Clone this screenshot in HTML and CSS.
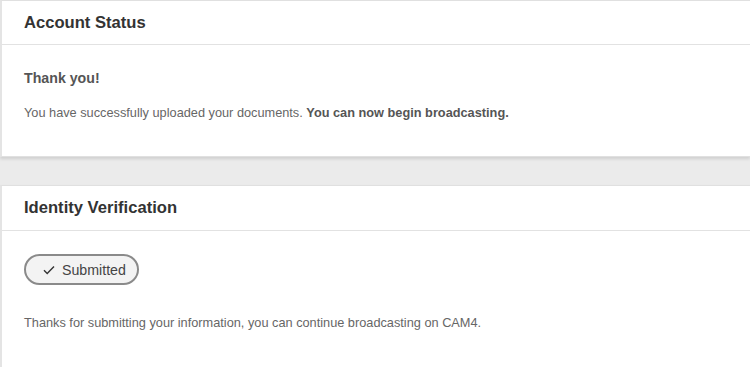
FILE: index.html
```html
<!DOCTYPE html>
<html>
<head>
<meta charset="utf-8">
<link rel="stylesheet" href="styles.css">
</head>
<body>
<div class="page">
  <section class="card card-status">
    <header class="card-header"><h2>Account Status</h2></header>
    <div class="card-body">
      <h3 class="thanks">Thank you!</h3>
      <p class="text">You have successfully uploaded your documents. <strong>You can now begin broadcasting.</strong></p>
    </div>
  </section>
  <section class="card card-identity">
    <header class="card-header"><h2>Identity Verification</h2></header>
    <div class="card-body">
      <span class="pill">
        <svg class="check" width="12" height="10" viewBox="0 0 12 10"><path d="M1 5.2 L4.2 8.4 L11 1.4" fill="none" stroke="#333" stroke-width="1.4"/></svg>
        Submitted
      </span>
      <p class="text note">Thanks for submitting your information, you can continue broadcasting on CAM4.</p>
    </div>
  </section>
</div>
</body>
</html>
```
FILE: styles.css
```css
html, body {
  margin: 0;
  padding: 0;
}
body {
  background: #ebebeb;
  font-family: "Liberation Sans", Arial, sans-serif;
  overflow: hidden;
  height: 367px;
}
.page {
  display: flex;
  flex-direction: column;
  gap: 28px;
  height: 400px;
}
.card {
  background: #fff;
  border: 1px solid #e0e0e0;
  border-right: none;
  border-left: 2px solid #e4e4e4;
  box-shadow: 0 2px 3px rgba(0,0,0,0.12);
}
.card-header {
  height: 43px;
  border-bottom: 1px solid #e2e2e2;
  display: flex;
  align-items: center;
  padding: 0 22px;
}
.card-identity .card-header {
  height: 44px;
}
.card-header h2 {
  margin: 0;
  font-size: 16.6px;
  font-weight: bold;
  color: #333;
}
.card-status .card-body {
  height: 111px;
  padding: 0 22px;
  box-sizing: border-box;
  padding-top: 25px;
}
.thanks {
  margin: 0;
  font-size: 14.2px;
  font-weight: bold;
  color: #555;
  line-height: 17px;
}
.text {
  margin: 0;
  font-size: 12.75px;
  color: #666;
  line-height: 16px;
}
.card-status .text {
  margin-top: 18px;
}
.text strong {
  color: #555;
}
.card-identity {
  flex: 1;
  display: flex;
  flex-direction: column;
}
.card-identity .card-body {
  padding: 23px 22px 0;
  flex: 1;
}
.pill {
  display: inline-flex;
  align-items: center;
  gap: 7px;
  box-sizing: border-box;
  height: 31px;
  width: 115px;
  padding: 0 0 0 17px;
  border: 2px solid #8a8a8a;
  border-radius: 16px;
  background: #f3f3f3;
  color: #444;
  font-size: 14.2px;
}
.check {
  display: block;
}
.note {
  margin-top: 30px;
}
```
